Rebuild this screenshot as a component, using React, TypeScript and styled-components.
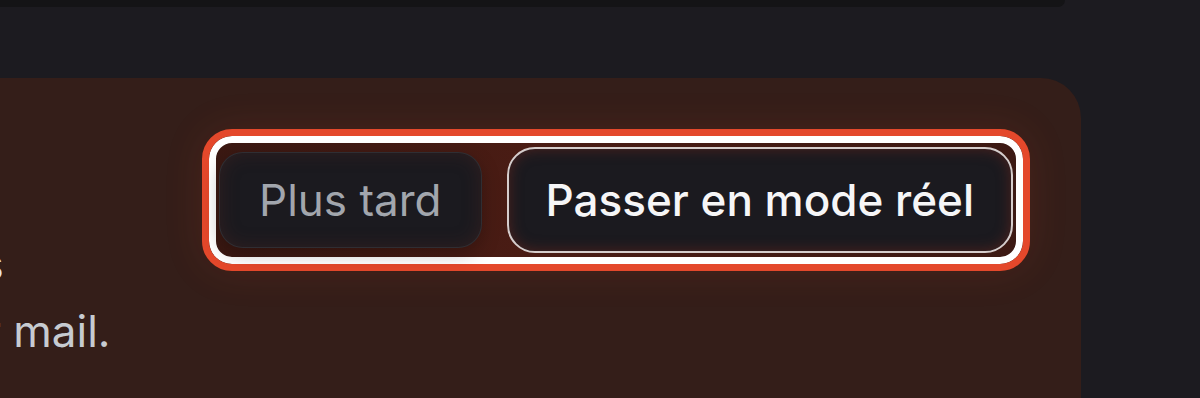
import styled, { createGlobalStyle } from "styled-components";

const GlobalStyle = createGlobalStyle`
  html, body {
    margin: 0;
    padding: 0;
    background: #1c1b20;
    font-family: Inter, "Noto Sans", "Liberation Sans", sans-serif;
    overflow: hidden;
  }
`;

const Page = styled.main`
  width: 1200px;
  height: 398px;
  overflow: hidden;
  background: #1c1b20;
`;

const PrevCard = styled.div`
  width: 1865px;
  height: 7px;
  margin-left: -800px;
  background: #141416;
  border-bottom-right-radius: 12px;
`;

const Card = styled.section`
  margin-top: 71px;
  margin-left: -751px;
  width: 1832px;
  height: 400px;
  box-sizing: border-box;
  padding: 51px;
  background: #341e19;
  border-radius: 40px;
  display: flex;
  align-items: flex-start;
`;

const TextCol = styled.div`
  flex: 1 1 auto;
  min-width: 0;
  display: flex;
  flex-direction: column;
  padding-top: 35px;
`;

const Title = styled.h2`
  margin: 0;
  font-size: 48px;
  line-height: 67px;
  font-weight: 600;
  color: #f4f4f5;
  white-space: nowrap;
`;

const Body = styled.p<{ $bright?: boolean }>`
  margin: 0;
  font-size: 44px;
  line-height: 67px;
  color: ${(p) => (p.$bright ? "#e4e4e7" : "#c7cbd1")};
  white-space: nowrap;
`;

const Ring = styled.div`
  margin-left: auto;
  flex-shrink: 0;
  display: flex;
  align-items: center;
  gap: 25px;
  padding: 11px 10px;
  border: 7px solid #e4482b;
  border-radius: 30px;
  background: linear-gradient(90deg, #3a1812 0%, #4a1c14 40%, #3c1913 100%);
  box-shadow: inset 0 0 0 7px #ffffff, 0 0 40px rgba(228, 72, 43, 0.12);
`;

const Button = styled.button<{ $primary?: boolean }>`
  box-sizing: border-box;
  height: ${(p) => (p.$primary ? "106px" : "96px")};
  padding: 0 ${(p) => (p.$primary ? "37px" : "39px")};
  border-radius: ${(p) => (p.$primary ? "28px" : "24px")};
  border: ${(p) =>
    p.$primary ? "2px solid #d6cdcc" : "1px solid rgba(255,255,255,0.09)"};
  background: #1b1a1f;
  color: ${(p) => (p.$primary ? "#f6f6f7" : "#a2a6ad")};
  font-family: Inter, "Noto Sans", "Liberation Sans", sans-serif;
  font-size: 44px;
  font-weight: ${(p) => (p.$primary ? 500 : 400)};
  white-space: nowrap;
  box-shadow: ${(p) =>
    p.$primary
      ? "inset 0 0 14px rgba(120, 40, 30, 0.55)"
      : "inset 0 0 18px rgba(90, 40, 35, 0.35), 0 6px 18px rgba(0,0,0,0.25)"};
  cursor: pointer;
`;

export default function App() {
  return (
    <Page>
      <GlobalStyle />
      <PrevCard />
      <Card>
        <TextCol>
          <Title>Mode démo</Title>
          <Body $bright>Vous utilisez des données fictives</Body>
          <Body>Vous recevrez la confirmation par mail.</Body>
        </TextCol>
        <Ring>
          <Button>Plus tard</Button>
          <Button $primary>Passer en mode réel</Button>
        </Ring>
      </Card>
    </Page>
  );
}
